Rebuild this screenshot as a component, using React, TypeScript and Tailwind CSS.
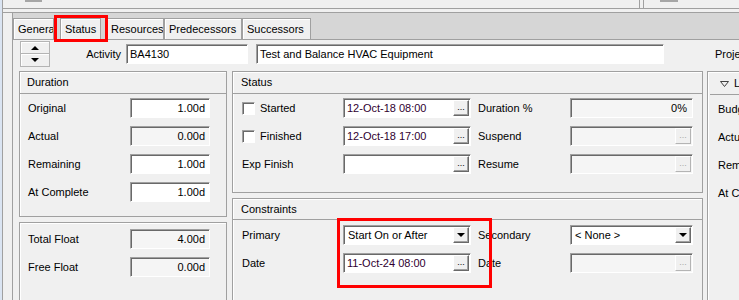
import React from 'react';

const sunken =
  'border border-t-[#a0a0a0] border-l-[#a0a0a0] border-r-white border-b-white shadow-[inset_1px_1px_0_#696969]';
const raised =
  'border border-t-white border-l-white border-r-[#696969] border-b-[#696969] shadow-[inset_-1px_-1px_0_#a0a0a0]';
const raisedOff = 'border border-t-white border-l-white border-r-[#b4b4b4] border-b-[#b4b4b4]';

function Box({
  className = '',
  disabled = false,
  children,
}: {
  className?: string;
  disabled?: boolean;
  children?: React.ReactNode;
}) {
  return (
    <div
      className={`flex h-[20px] shrink-0 items-center ${sunken} ${
        disabled ? 'bg-[#f5f5f5]' : 'bg-white'
      } ${className}`}
    >
      {children}
    </div>
  );
}

function Dots({ disabled = false }: { disabled?: boolean }) {
  return (
    <div
      className={`mr-px ml-auto flex h-[16px] w-[16px] shrink-0 items-end justify-center bg-[#f0f0f0] pb-[3px] text-[9px] leading-none ${
        disabled ? `${raisedOff} text-[#a8a8a8]` : `${raised} text-black`
      }`}
    >
      ...
    </div>
  );
}

function DateBox({ value, disabled = false, className = '' }: { value?: string; disabled?: boolean; className?: string }) {
  return (
    <Box className={className} disabled={disabled}>
      <span className="pl-[3px] text-[#300030]">{value}</span>
      <Dots disabled={disabled} />
    </Box>
  );
}

function Select({ value, className = '' }: { value: string; className?: string }) {
  return (
    <Box className={className}>
      <span className="pl-[4px]">{value}</span>
      <div className={`mr-px ml-auto flex h-[16px] w-[16px] shrink-0 items-center justify-center bg-[#f0f0f0] ${raised}`}>
        <div className="h-0 w-0 border-x-[4px] border-t-[4px] border-x-transparent border-t-black" />
      </div>
    </Box>
  );
}

function Check() {
  return <div className={`h-[13px] w-[13px] shrink-0 bg-white ${sunken}`} />;
}

function Panel({
  title,
  className = '',
  headerClass = 'h-[22px]',
  children,
}: {
  title?: React.ReactNode;
  className?: string;
  headerClass?: string;
  children?: React.ReactNode;
}) {
  return (
    <div className={`border border-[#a0a0a0] shadow-[inset_1px_1px_0_#fff] ${className}`}>
      {title !== undefined && (
        <div className={`flex items-center border-b border-[#a0a0a0] pl-[7px] ${headerClass}`}>{title}</div>
      )}
      {children}
    </div>
  );
}

function NumRow({ label, value, disabled = false }: { label: string; value: string; disabled?: boolean }) {
  return (
    <div className="flex h-[20px] items-center">
      <div className="w-[110px] shrink-0 pl-[8px]">{label}</div>
      <Box className="w-[80px] justify-end pr-[4px]" disabled={disabled}>
        {value}
      </Box>
    </div>
  );
}

const tabs = [
  { name: 'General', w: 'w-[41px]', ml: '' },
  { name: 'Status', w: 'w-[41px]', ml: 'ml-[6px]' },
  { name: 'Resources', w: 'w-[58px]', ml: 'ml-[5px]' },
  { name: 'Predecessors', w: 'w-[78px]', ml: '' },
  { name: 'Successors', w: 'w-[69px]', ml: '' },
];

export default function App() {
  return (
    <div className="relative flex h-[300px] w-[739px] overflow-hidden bg-[#f0f0f0] font-['Liberation_Sans',Arial,sans-serif] text-[11px] leading-none text-black">
      <div className="w-[2px] shrink-0 bg-[#dae4f2]" />
      <div className="w-px shrink-0 bg-[#a0a0a0]" />

      <div className="flex min-w-0 flex-1 flex-col">
        {/* strip above the tab control */}
        <div className="flex h-[9px] shrink-0 items-start border-b border-[#a0a0a0]">
          <div className="ml-[22px] h-[2px] w-[17px] shrink-0 bg-[#a6a6a6]" />
          <div className="ml-[597px] h-[8px] w-px shrink-0 bg-[#a0a0a0]" />
          <div className="ml-[3px] h-[8px] w-px shrink-0 bg-[#a0a0a0]" />
          <div className="ml-[16px] h-[2px] w-[18px] shrink-0 bg-[#a6a6a6]" />
        </div>
        <div className="h-[3px] shrink-0" />

        <div className="flex flex-1 border-t border-[#a0a0a0]">
          <div className="w-[9px] shrink-0" />
          <div className="flex min-w-0 flex-1 flex-col border-l border-[#a0a0a0]">
            {/* tab band */}
            <div className="flex h-[27px] shrink-0 items-end border-b border-[#a0a0a0] bg-[#d6d6d6]">
              {tabs.map((t) => (
                <div
                  key={t.name}
                  className={`flex h-[21px] shrink-0 items-center overflow-hidden border-x border-t border-[#a0a0a0] bg-[#f0f0f0] pl-[4px] whitespace-nowrap shadow-[inset_1px_1px_0_#fff] ${t.w} ${t.ml}`}
                >
                  {t.name}
                </div>
              ))}
            </div>

            {/* activity row */}
            <div className="flex h-[27px] shrink-0 items-center pt-px">
              <div className="ml-[7px] flex h-[26px] w-[30px] shrink-0 flex-col">
                <div className="flex h-[13px] items-center justify-center border border-[#b4b4b4] bg-[#f0f0f0] shadow-[inset_1px_1px_0_#fff]">
                  <div className="h-0 w-0 border-x-[4px] border-b-[4px] border-x-transparent border-b-black" />
                </div>
                <div className="flex h-[13px] items-center justify-center border border-t-0 border-[#b4b4b4] bg-[#f0f0f0] shadow-[inset_1px_1px_0_#fff]">
                  <div className="h-0 w-0 border-x-[4px] border-t-[4px] border-x-transparent border-t-black" />
                </div>
              </div>
              <div className="w-[76px] shrink-0 pr-[5px] text-right">Activity</div>
              <Box className="w-[122px] pl-[3px]">BA4130</Box>
              <Box className="ml-[8px] w-[408px] pl-[3px]">Test and Balance HVAC Equipment</Box>
              <div className="ml-[51px] shrink-0 whitespace-nowrap">Project</div>
            </div>

            {/* panels */}
            <div className="mt-[4px] flex items-start">
              <div className="ml-[6px] flex w-[208px] shrink-0 flex-col">
                <Panel title="Duration" className="h-[146px]">
                  <div className="flex flex-col gap-[8px] pt-[4px]">
                    <NumRow label="Original" value="1.00d" />
                    <NumRow label="Actual" value="0.00d" disabled />
                    <NumRow label="Remaining" value="1.00d" />
                    <NumRow label="At Complete" value="1.00d" />
                  </div>
                </Panel>
                <Panel className="mt-[5px] h-[100px]">
                  <div className="flex flex-col gap-[8px] pt-[6px]">
                    <NumRow label="Total Float" value="4.00d" disabled />
                    <NumRow label="Free Float" value="0.00d" disabled />
                  </div>
                </Panel>
              </div>

              <div className="ml-[5px] flex w-[471px] shrink-0 flex-col">
                <Panel title="Status" className="h-[122px]" headerClass="h-[22px] pl-[8px]">
                  <div className="flex flex-col gap-[8px] pt-[4px]">
                    <div className="flex h-[20px] items-center">
                      <div className="flex w-[110px] shrink-0 items-center pl-[9px]">
                        <Check />
                        <span className="ml-[5px]">Started</span>
                      </div>
                      <DateBox className="w-[128px]" value="12-Oct-18 08:00" />
                      <div className="w-[99px] shrink-0 pl-[7px]">Duration %</div>
                      <Box className="w-[123px] justify-end pr-[5px]" disabled>
                        0%
                      </Box>
                    </div>
                    <div className="flex h-[20px] items-center">
                      <div className="flex w-[110px] shrink-0 items-center pl-[9px]">
                        <Check />
                        <span className="ml-[5px]">Finished</span>
                      </div>
                      <DateBox className="w-[128px]" value="12-Oct-18 17:00" />
                      <div className="w-[99px] shrink-0 pl-[7px]">Suspend</div>
                      <DateBox className="w-[123px]" disabled />
                    </div>
                    <div className="flex h-[20px] items-center">
                      <div className="w-[110px] shrink-0 pl-[9px]">Exp Finish</div>
                      <DateBox className="w-[128px]" />
                      <div className="w-[99px] shrink-0 pl-[7px]">Resume</div>
                      <DateBox className="w-[123px]" disabled />
                    </div>
                  </div>
                </Panel>
                <Panel title="Constraints" className="mt-[5px] h-[110px]" headerClass="h-[21px] pl-[8px]">
                  <div className="flex flex-col gap-[8px] pt-[5px]">
                    <div className="flex h-[20px] items-center">
                      <div className="w-[110px] shrink-0 pl-[9px]">Primary</div>
                      <Select className="w-[128px]" value="Start On or After" />
                      <div className="w-[99px] shrink-0 pl-[7px]">Secondary</div>
                      <Select className="w-[123px]" value="< None >" />
                    </div>
                    <div className="flex h-[20px] items-center">
                      <div className="w-[110px] shrink-0 pl-[9px]">Date</div>
                      <DateBox className="w-[128px]" value="11-Oct-24 08:00" />
                      <div className="w-[99px] shrink-0 pl-[7px]">Date</div>
                      <DateBox className="w-[123px]" disabled />
                    </div>
                  </div>
                </Panel>
              </div>

              <div className="ml-[4px] w-[120px] shrink-0">
                <Panel
                  className="h-[240px]"
                  headerClass="h-[22px] ml-[2px] mt-px pl-[10px]"
                  title={
                    <span className="flex items-center gap-[5px] whitespace-nowrap">
                      <svg width="9" height="6" viewBox="0 0 9 6">
                        <polygon points="0.5,0.5 8.5,0.5 4.5,5.5" fill="none" stroke="#404040" strokeWidth="1" />
                      </svg>
                      Labor Units
                    </span>
                  }
                >
                  <div className="flex flex-col gap-[8px] pt-[4px] pl-[10px] whitespace-nowrap">
                    <div className="flex h-[20px] items-center">Budgeted</div>
                    <div className="flex h-[20px] items-center">Actual</div>
                    <div className="flex h-[20px] items-center">Remaining</div>
                    <div className="flex h-[20px] items-center">At Completion</div>
                  </div>
                </Panel>
              </div>
            </div>
          </div>
        </div>
      </div>

      {/* red annotation boxes */}
      <div className="pointer-events-none absolute top-[15px] left-[54px] h-[27px] w-[54px] border-[3px] border-[#ff0000]" />
      <div className="pointer-events-none absolute top-[218px] left-[337px] h-[70px] w-[155px] border-[3px] border-[#ff0000]" />
    </div>
  );
}
